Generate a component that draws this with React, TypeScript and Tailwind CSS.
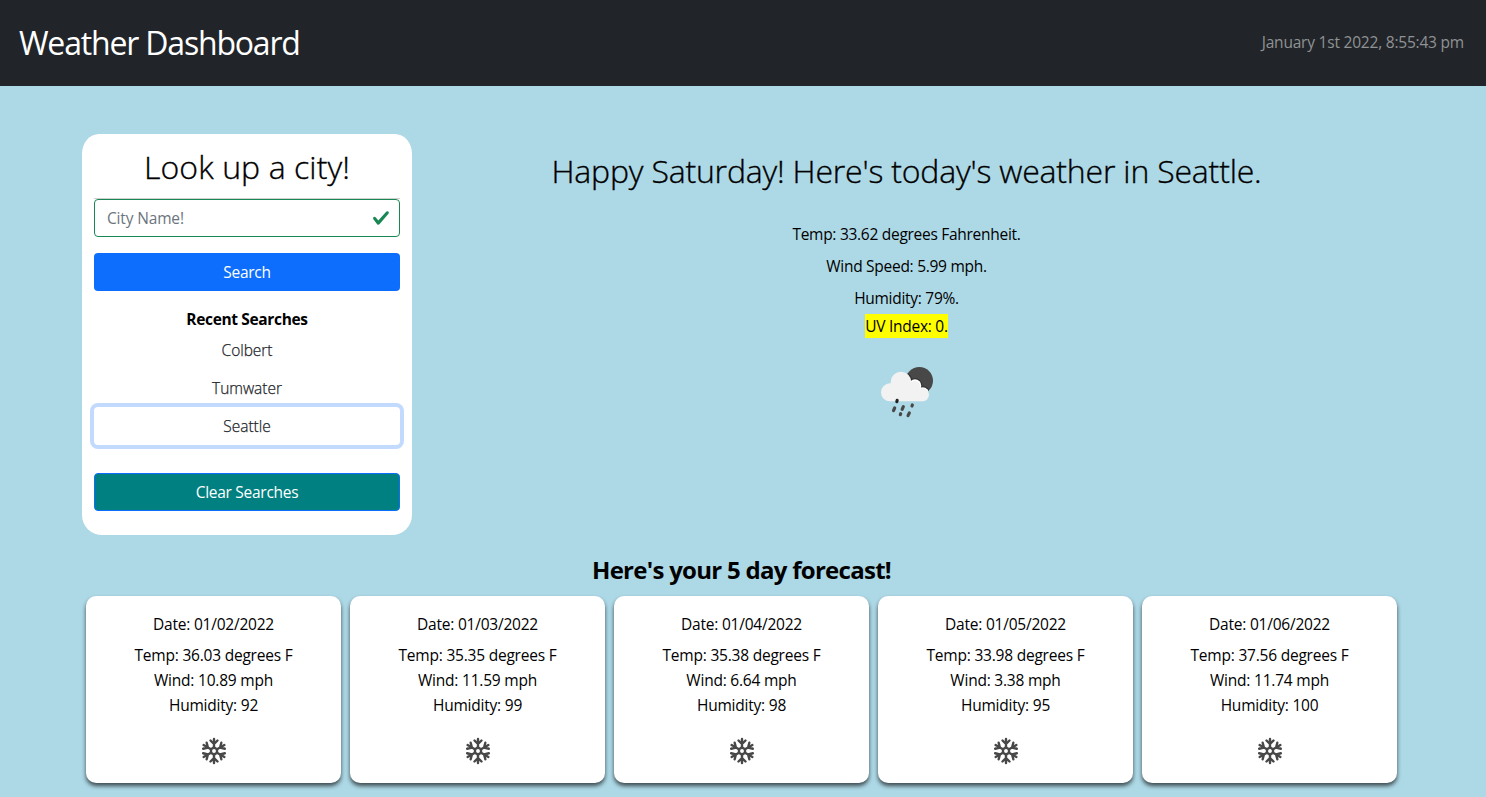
import React from "react";

const days = [
  { date: "01/02/2022", temp: "36.03", wind: "10.89", humidity: 92 },
  { date: "01/03/2022", temp: "35.35", wind: "11.59", humidity: 99 },
  { date: "01/04/2022", temp: "35.38", wind: "6.64", humidity: 98 },
  { date: "01/05/2022", temp: "33.98", wind: "3.38", humidity: 95 },
  { date: "01/06/2022", temp: "37.56", wind: "11.74", humidity: 100 },
];

function RainIcon() {
  return (
    <svg className="h-20 w-[100px]" viewBox="0 0 300 240" aria-hidden="true">
      <defs>
        <clipPath id="moon">
          <circle cx="178" cy="92" r="41" />
        </clipPath>
      </defs>
      <circle cx="178" cy="92" r="41" fill="#484848" />
      <g clipPath="url(#moon)" fill="#2c2c2c">
        <circle cx="123" cy="96" r="34" />
        <circle cx="165" cy="107" r="22" />
        <circle cx="188" cy="133" r="24" />
      </g>
      <g clipPath="url(#moon)" fill="#ffffff">
        <circle cx="165" cy="107" r="19" />
        <circle cx="188" cy="133" r="21" />
      </g>
      <g fill="#f2f2f2">
        <circle cx="90" cy="127" r="27" />
        <circle cx="123" cy="96" r="31" />
        <circle cx="164" cy="109" r="16" />
        <circle cx="187" cy="134" r="20" />
        <path d="M90 100H160L187 130V154H90Z" />
      </g>
      <g stroke="#484848" strokeWidth="9.500" strokeLinecap="round">
        <path d="M111.500 151l-1 4" stroke="#222" />
        <path d="M104 174l-3.500 8M130 170l-3.500 8M157 165l-1 3M122 191l-1 3M148 189l-4 8" />
      </g>
    </svg>
  );
}

const arms = [0, 60, 120, 180, 240, 300];

function SnowIcon() {
  return (
    <svg className="h-[30px] w-[30px]" viewBox="-15 -15 30 30" aria-hidden="true">
      <g fill="none" stroke="#484848" strokeWidth="2.400" strokeLinecap="round">
        {arms.map((a) => (
          <path key={a} transform={`rotate(${a})`} d="M0 -3.500V-12M0 -7L-3.500 -10.500M0 -7L3.500 -10.500" />
        ))}
        <path d="M0 -3.500L3 -1.750V1.750L0 3.500L-3 1.750V-1.750Z" />
      </g>
    </svg>
  );
}

export default function App() {
  return (
    <div className="h-[797px] overflow-hidden bg-[#add8e6] font-['Open_Sans',sans-serif] text-[15.5px] tracking-[-0.280px] text-black">
      <header className="flex h-[86px] items-center justify-between bg-[#212529] pr-[22px] pl-[19px]">
        <h1 className="text-[32px] leading-[38px] tracking-[-1.180px] text-white">Weather Dashboard</h1>
        <time className="pb-0.5 leading-6 tracking-[-0.210px] text-[#909294]">January 1st 2022, 8:55:43 pm</time>
      </header>

      <main className="px-[82px] pt-12">
        <div className="flex">
          <aside className="h-[401px] w-[330px] rounded-[20px] rounded-t-[17px_20px] bg-white px-3 pt-3.5 text-center">
            <h2 className="text-[32px] leading-[38px] font-light tracking-[0.080px] [-webkit-text-stroke:0.350px_black]">
              Look up a city!
            </h2>
            <hr className="mt-3 border-[#d0d0d0]" />
            <div className="flex h-[38px] items-center rounded border border-[#198754] px-3">
              <input
                className="min-w-0 flex-1 pt-0.5 tracking-[-0.160px] outline-none placeholder:text-[#6c757d]"
                placeholder="City Name!"
              />
              <svg className="-mr-[3px] h-[18px] w-[18px]" viewBox="0 0 8 8" aria-hidden="true">
                <path
                  fill="#198754"
                  d="M2.300 6.730L.6 4.530c-.4-1.040.46-1.400 1.100-.8l1.100 1.400 3.400-3.800c.6-.63 1.600-.27 1.200.7l-4 4.600c-.43.500-.8.400-1.100.1z"
                />
              </svg>
            </div>
            <button className="mt-4 h-[38px] w-full rounded bg-[#0d6efd] pt-0.5 text-white">Search</button>
            <h3 className="mt-4 leading-6 font-bold tracking-[-0.350px]">Recent Searches</h3>
            <div className="flex flex-col font-light tracking-[-0.040px] text-[#212529] [-webkit-text-stroke:0.250px_#212529]">
              <button className="h-[38px] pt-0.5">Colbert</button>
              <button className="h-[38px] pt-0.5">Tumwater</button>
              <button className="h-[38px] rounded pt-0.5 shadow-[0_0_0_4px_#c2dafe]">Seattle</button>
            </div>
            <button className="mt-7 h-[38px] w-full rounded border border-[#0d6efd] bg-[#008080] pt-0.5 text-white">
              Clear Searches
            </button>
          </aside>

          <section className="flex flex-1 flex-col items-center pt-[18px] pr-[3px]">
            <h2 className="text-[32px] leading-[38px] font-light tracking-[-0.190px] [-webkit-text-stroke:0.350px_black]">
              Happy Saturday! Here's today's weather in Seattle.
            </h2>
            <div className="mt-8 flex flex-col items-center gap-2 leading-6">
              <p>Temp: 33.62 degrees Fahrenheit.</p>
              <p>Wind Speed: 5.99 mph.</p>
              <p>Humidity: 79%.</p>
            </div>
            <p className="mt-1 bg-[#ffff00] leading-6">UV Index: 0.</p>
            <div className="mt-3 ml-[7px]">
              <RainIcon />
            </div>
          </section>
        </div>

        <h2 className="mt-5 pr-[3px] text-center text-2xl leading-[29px] font-bold tracking-[-0.720px]">
          Here's your 5 day forecast!
        </h2>
        <div className="mt-3 ml-1 flex gap-[9px]">
          {days.map((d) => (
            <article
              key={d.date}
              className="flex h-[187px] w-[255px] flex-col items-center rounded-[10px] bg-white pt-4 leading-[25px] tracking-[-0.220px] shadow-[0_3px_4px_rgba(0,0,0,0.650)]"
            >
              <p className="mb-1.5">Date: {d.date}</p>
              <p>Temp: {d.temp} degrees F</p>
              <p>Wind: {d.wind} mph</p>
              <p>Humidity: {d.humidity}</p>
              <div className="mt-[18px] ml-px">
                <SnowIcon />
              </div>
            </article>
          ))}
        </div>
      </main>
    </div>
  );
}
